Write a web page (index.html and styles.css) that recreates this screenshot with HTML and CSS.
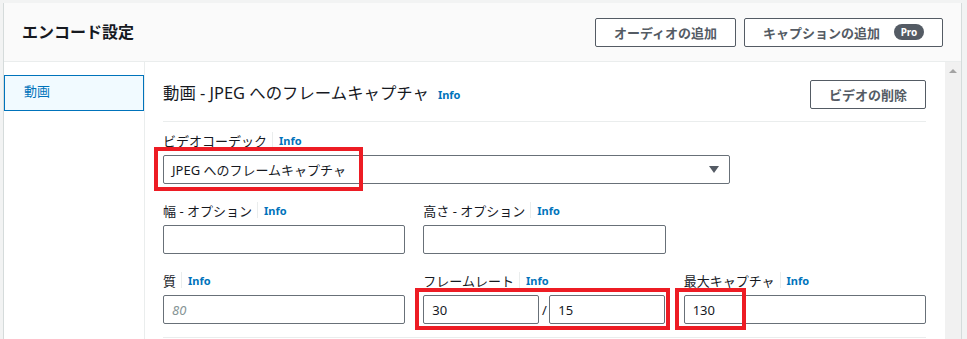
FILE: index.html
```html
<!DOCTYPE html>
<html lang="ja">
  <head>
    <meta charset="UTF-8" />
    <title>エンコード設定</title>
    <link rel="stylesheet" href="styles.css">
  </head>
  <body>
    <div class="panel">
      <header class="panel-head">
        <h2>エンコード設定</h2>
        <div class="actions">
          <button class="btn">オーディオの追加</button>
          <button class="btn">キャプションの追加<span class="badge">Pro</span></button>
        </div>
      </header>
      <div class="panel-body">
        <nav class="side">
          <a class="side-item active">動画</a>
        </nav>
        <main class="content">
          <div class="title-row">
            <h3>動画 - JPEG へのフレームキャプチャ<a class="info">Info</a></h3>
            <button class="btn">ビデオの削除</button>
          </div>
          <div class="divider"></div>

          <div class="field first">
            <div class="label">ビデオコーデック<span class="sep"></span><a class="info">Info</a></div>
            <div class="mark-wrap">
              <div class="select">
                <span>JPEG へのフレームキャプチャ</span>
                <span class="caret"></span>
              </div>
              <span class="mark mark-codec"></span>
            </div>
          </div>

          <div class="grid">
            <div class="field">
              <div class="label">幅 - オプション<span class="sep"></span><a class="info">Info</a></div>
              <input type="text" class="input" />
            </div>
            <div class="field">
              <div class="label">高さ - オプション<span class="sep"></span><a class="info">Info</a></div>
              <input type="text" class="input" />
            </div>
            <div class="field"></div>

            <div class="field">
              <div class="label">質<span class="sep"></span><a class="info">Info</a></div>
              <input type="text" class="input" placeholder="80" />
            </div>
            <div class="field">
              <div class="label">フレームレート<span class="sep"></span><a class="info">Info</a></div>
              <div class="mark-wrap rate">
                <input type="text" class="input" value="30" />
                <span class="slash">/</span>
                <input type="text" class="input" value="15" />
                <span class="mark mark-rate"></span>
              </div>
            </div>
            <div class="field">
              <div class="label">最大キャプチャ<span class="sep"></span><a class="info">Info</a></div>
              <div class="mark-wrap">
                <input type="text" class="input" value="130" />
                <span class="mark mark-max"></span>
              </div>
            </div>
          </div>
          <div class="divider bottom"></div>
        </main>
        <div class="scrollbar"><span class="arrow"></span></div>
      </div>
    </div>
  </body>
</html>
```

FILE: styles.css
```css
body {
  margin: 0;
  background-color: #f2f3f3;
  font-family: "Noto Sans", "Noto Sans CJK JP", sans-serif;
  color: #16191f;
  height: 339px;
  overflow: hidden;
}
.panel {
  margin: 3px 0 0 3px;
  width: 959px;
  box-sizing: border-box;
  border-left: 1px solid #d5dbdb;
  border-right: 1px solid #d5dbdb;
  background: #fff;
}
.panel-head {
  display: flex;
  justify-content: space-between;
  align-items: center;
  height: 58px;
  padding: 0 18px 0 18px;
  background: #fafafa;
  border-bottom: 1px solid #eaeded;
}
.panel-head h2 {
  margin: 0 0 2px 0;
  font-size: 16px;
  font-weight: 700;
}
.actions {
  display: flex;
  gap: 8px;
}
.btn {
  display: flex;
  align-items: center;
  height: 29px;
  padding: 0 18px;
  background: #fff;
  border: 1px solid #545b64;
  border-radius: 2px;
  color: #545b64;
  font-family: inherit;
  font-size: 13px;
  font-weight: 700;
}
.badge {
  display: inline-block;
  margin-left: 14px;
  width: 30px;
  height: 16px;
  line-height: 16px;
  border-radius: 8px;
  background: #545b64;
  color: #fff;
  font-size: 10px;
  text-align: center;
}
.panel-body {
  display: flex;
  height: 277px;
}
.side {
  width: 140px;
  padding-top: 13px;
  border-right: 1px solid #eaeded;
}
.side-item {
  display: block;
  height: 36px;
  line-height: 31px;
  box-sizing: border-box;
  padding-left: 19px;
  font-size: 13px;
  color: #0073bb;
}
.side-item.active {
  background: #f1faff;
  border: 1px solid #0073bb;
}
.content {
  width: 800px;
  box-sizing: border-box;
  padding: 18px 19px 0 18px;
}
.title-row {
  display: flex;
  justify-content: space-between;
  align-items: center;
}
.title-row h3 {
  margin: 0 0 5px 0;
  font-size: 16.4px;
  font-weight: 400;
}
.info {
  margin-left: 9px;
  color: #0073bb;
  font-size: 11px;
  font-weight: 700;
}
.label .info {
  margin-left: 0;
}
.divider {
  height: 1px;
  background: #eaeded;
  margin-top: 12px;
}
.divider.bottom {
  margin-top: 13px;
}
.field.first {
  padding-top: 8px;
}
.label {
  display: flex;
  align-items: center;
  height: 20px;
  margin-bottom: 5px;
  font-size: 13px;
}
.sep {
  width: 1px;
  height: 16px;
  background: #eaeded;
  margin: 0 6px 0 5px;
}
.select {
  display: flex;
  justify-content: space-between;
  align-items: center;
  width: 567px;
  height: 29px;
  box-sizing: border-box;
  padding: 0 10px 0 8px;
  border: 1px solid #687078;
  border-radius: 2px;
  font-size: 13px;
}
.caret {
  width: 0;
  height: 0;
  border-left: 5px solid transparent;
  border-right: 5px solid transparent;
  border-top: 7px solid #545b64;
}
.grid {
  display: grid;
  grid-template-columns: repeat(3, 1fr);
  column-gap: 18px;
  row-gap: 16px;
  margin-top: 16px;
}
.input {
  display: block;
  width: 100%;
  height: 29px;
  box-sizing: border-box;
  padding: 0 8px;
  border: 1px solid #687078;
  border-radius: 2px;
  font-family: inherit;
  font-size: 13px;
  color: #16191f;
}
.input::placeholder {
  color: #879596;
  font-style: italic;
}
.mark-wrap {
  position: relative;
}
.rate {
  display: flex;
  align-items: center;
}
.rate .input {
  width: 116px;
}
.slash {
  width: 10px;
  text-align: center;
  font-size: 13px;
}
.mark {
  position: absolute;
  box-sizing: border-box;
  border: 4px solid #ed1c24;
}
.mark-codec {
  left: -9px;
  top: -8px;
  width: 209px;
  height: 44px;
}
.mark-rate {
  left: -8px;
  top: -7px;
  width: 255px;
  height: 42px;
}
.mark-max {
  left: -9px;
  top: -7px;
  width: 71px;
  height: 42px;
}
.scrollbar {
  width: 16px;
  background: #f1f1f1;
  display: flex;
  justify-content: center;
}
.arrow {
  margin-top: 7px;
  width: 0;
  height: 0;
  border-left: 4px solid transparent;
  border-right: 4px solid transparent;
  border-bottom: 4px solid #a3a3a3;
}
```
